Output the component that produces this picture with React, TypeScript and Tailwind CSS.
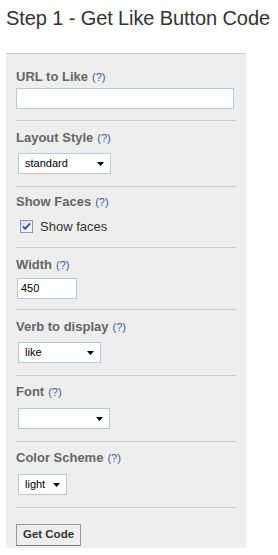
import React from 'react';

function Help() {
    return <span className="ml-[4px] text-[11px] font-normal text-[#3b5998]">(?)</span>;
}

function Label({ children }: { children: React.ReactNode }) {
    return (
        <div className="h-[16px] leading-[16px] text-[13px] font-bold text-[#666666] whitespace-nowrap">
            {children}
            <Help />
        </div>
    );
}

function Select({ value, width }: { value: string; width: string }) {
    return (
        <div className={`ml-[2px] h-[21px] ${width} bg-white border border-[#bdc7d8] flex items-center justify-between pl-[6px] pr-[6px]`}>
            <span className="text-[11px] text-black leading-none">{value}</span>
            <svg width="7" height="4" viewBox="0 0 7 4" className="shrink-0">
                <path d="M0 0h7L3.5 4z" fill="#000" />
            </svg>
        </div>
    );
}

export default function App() {
    return (
        <div className="w-[278px] h-[555px] bg-white" style={{ fontFamily: '"Liberation Sans", Arial, sans-serif' }}>
            {/* Title */}
            <h1 className="pt-[6px] pl-[6px] h-[53px] text-[20px] leading-[24px] tracking-[-0.1px] font-normal text-[#333333] whitespace-nowrap">
                Step 1 - Get Like Button Code
            </h1>

            {/* Form panel */}
            <div className="ml-[6px] w-[240px] h-[495px] bg-[#eeeeee] border-t border-[#cccccc] px-[10px]">
                {/* URL */}
                <div className="pt-[15px] pb-[11px] border-b border-[#cccccc]">
                    <Label>URL to Like</Label>
                    <div className="mt-[3px] h-[21px] w-[218px] bg-white border border-[#bdc7d8]" />
                </div>

                {/* Layout */}
                <div className="pt-[9px] pb-[12px] border-b border-[#cccccc]">
                    <Label>Layout Style</Label>
                    <div className="mt-[7px]">
                        <Select value="standard" width="w-[93px]" />
                    </div>
                </div>

                {/* Show faces */}
                <div className="pt-[7px] pb-[11px] border-b border-[#cccccc]">
                    <Label>Show Faces</Label>
                    <div className="mt-[6px] h-[20px] flex items-center gap-[7px] pl-[4px]">
                        <span className="w-[13px] h-[13px] border border-[#7f9db9] bg-gradient-to-br from-[#d4d8e4] to-white flex items-center justify-center">
                            <svg width="9" height="9" viewBox="0 0 9 9">
                                <path d="M1 4.5l2.2 2.3L8 1.5" fill="none" stroke="#2c3e94" strokeWidth="1.8" />
                            </svg>
                        </span>
                        <span className="text-[13px] text-[#333333] leading-none">Show faces</span>
                    </div>
                </div>

                {/* Width */}
                <div className="pt-[9px] pb-[10px] border-b border-[#cccccc]">
                    <Label>Width</Label>
                    <div className="mt-[5px] ml-[1px] h-[21px] w-[60px] bg-white border border-[#bdc7d8] flex items-center pl-[3px]">
                        <span className="text-[11px] text-black leading-none">450</span>
                    </div>
                </div>

                {/* Verb */}
                <div className="pt-[9px] pb-[12px] border-b border-[#cccccc]">
                    <Label>Verb to display</Label>
                    <div className="mt-[7px]">
                        <Select value="like" width="w-[83px]" />
                    </div>
                </div>

                {/* Font */}
                <div className="pt-[8px] pb-[12px] border-b border-[#cccccc]">
                    <Label>Font</Label>
                    <div className="mt-[8px]">
                        <Select value="" width="w-[92px]" />
                    </div>
                </div>

                {/* Color scheme */}
                <div className="pt-[8px] pb-[12px] border-b border-[#cccccc]">
                    <Label>Color Scheme</Label>
                    <div className="mt-[8px]">
                        <Select value="light" width="w-[49px]" />
                    </div>
                </div>

                {/* Submit */}
                <div className="pt-[13px]">
                    <button className="h-[22px] w-[65px] bg-[#eeeeee] border border-[#999999] border-b-[#7a7a7a] text-[11.5px] font-bold text-[#333333] leading-none">
                        Get Code
                    </button>
                </div>
            </div>
        </div>
    );
}
